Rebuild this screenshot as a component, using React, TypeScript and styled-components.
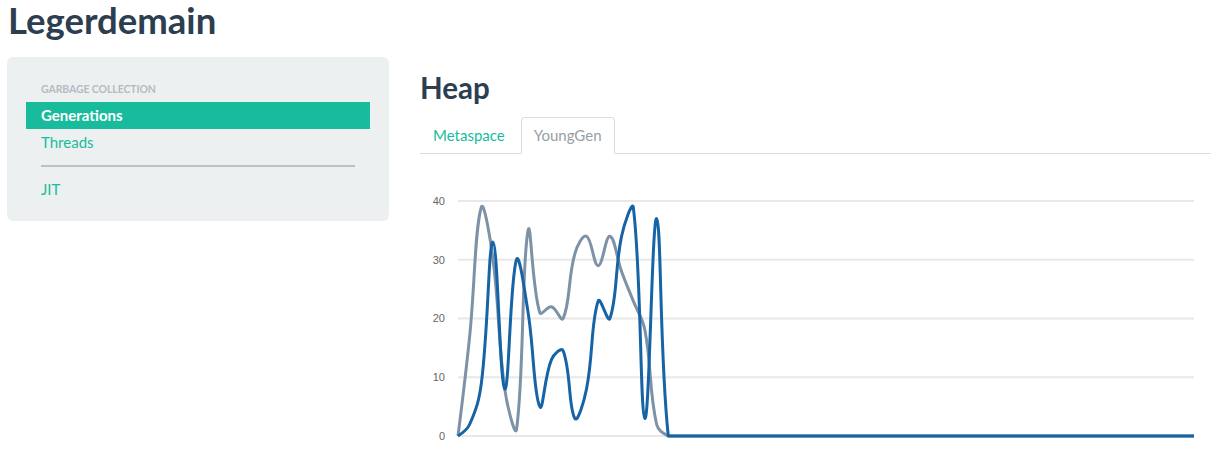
import React from "react";
import styled, { createGlobalStyle, css } from "styled-components";

const GlobalStyle = createGlobalStyle`
  html, body {
    margin: 0;
    padding: 0;
    background: #ffffff;
  }
  body {
    font-family: Lato, "Open Sans", "Liberation Sans", sans-serif;
    font-size: 15px;
    color: #2c3e50;
  }
  * { box-sizing: border-box; }
`;

const Page = styled.div`
  padding: 0 0 0 7px;
  overflow: hidden;
  height: 456px;
`;

const Title = styled.h1`
  margin: 0;
  padding: 2px 0 0 1px;
  font-size: 36.5px;
  line-height: 36px;
  font-weight: 700;
  color: #2c3e50;
`;

const Row = styled.div`
  display: flex;
  align-items: flex-start;
  gap: 31px;
  margin-top: 19px;
`;

const Well = styled.nav`
  flex: 0 0 382px;
  background: #ecf0f1;
  border-radius: 6px;
  padding: 19px 19px 18px;
  display: flex;
  flex-direction: column;
`;

const NavHeader = styled.div`
  padding: 0 15px;
  line-height: 26px;
  font-size: 10.5px;
  font-weight: 700;
  text-transform: uppercase;
  color: #b4bcc2;
  letter-spacing: -0.1px;
`;

const NavItem = styled.a<{ $active?: boolean }>`
  display: block;
  padding: 3px 15px;
  line-height: 21px;
  font-size: 15px;
  color: #18bc9c;
  text-decoration: none;
  ${(p) =>
    p.$active &&
    css`
      background: #18bc9c;
      color: #ffffff;
      font-weight: 700;
    `}
`;

const Divider = styled.hr`
  margin: 9px 15px;
  border: 0;
  height: 2px;
  background: #bdc1c4;
`;

const Main = styled.main`
  flex: 1;
  min-width: 0;
`;

const Heading = styled.h2`
  margin: 14px 0 0;
  font-size: 29.5px;
  line-height: 33px;
  font-weight: 700;
  color: #2c3e50;
`;

const Tabs = styled.ul`
  display: flex;
  gap: 3px;
  list-style: none;
  margin: 13px 0 0;
  padding: 0;
  border-bottom: 1px solid #dddddd;
`;

const Tab = styled.li<{ $active?: boolean }>`
  margin-bottom: -1px;
  padding: 7px 12px;
  line-height: 21px;
  font-size: 15px;
  border: 1px solid transparent;
  border-radius: 4px 4px 0 0;
  color: #18bc9c;
  ${(p) =>
    p.$active &&
    css`
      color: #95a0a6;
      background: #ffffff;
      border-color: #dddddd;
      border-bottom-color: #ffffff;
    `}
`;

const ChartSvg = styled.svg`
  display: block;
  margin-top: 21px;
`;

const W = 791;
const H = 281;
const X0 = 38;
const X1 = 774;
const TOP = 26;
const BOTTOM = 261;
const MAX = 40;
const N = 64;

const pad = (arr: number[]) => [...arr, ...Array(N - arr.length).fill(0)];

const gray = pad([0, 17, 39, 30, 8, 1, 35, 21, 22, 20, 31, 34, 29, 34, 28, 23, 18, 2, 0]);
const blue = pad([0, 2, 9, 33, 8, 30, 21, 5, 13, 14.5, 3, 8, 23, 20, 34, 39, 3, 37, 0]);

type P = { x: number; y: number };

function splinePath(values: number[]): string {
  const step = (X1 - X0) / (values.length - 1);
  const pts: P[] = values.map((v, i) => ({
    x: X0 + i * step,
    y: BOTTOM - (v / MAX) * (BOTTOM - TOP),
  }));
  const cap = (y: number) => Math.min(BOTTOM, Math.max(TOP, y));
  const cps = pts.map((p, i) => {
    const prev = pts[i - 1] || p;
    const next = pts[i + 1] || p;
    const t = i > 0 && i < pts.length - 1 ? 0.4 : 0;
    const d01 = Math.hypot(p.x - prev.x, p.y - prev.y);
    const d12 = Math.hypot(next.x - p.x, next.y - p.y);
    const sum = d01 + d12 || 1;
    const fa = (t * d01) / sum;
    const fb = (t * d12) / sum;
    return {
      inner: { x: p.x - fa * (next.x - prev.x), y: cap(p.y - fa * (next.y - prev.y)) },
      outer: { x: p.x + fb * (next.x - prev.x), y: cap(p.y + fb * (next.y - prev.y)) },
    };
  });
  let d = `M${pts[0].x.toFixed(2)},${pts[0].y.toFixed(2)}`;
  for (let i = 1; i < pts.length; i++) {
    const a = cps[i - 1].outer;
    const b = cps[i].inner;
    const p = pts[i];
    d += ` C${a.x.toFixed(2)},${a.y.toFixed(2)} ${b.x.toFixed(2)},${b.y.toFixed(2)} ${p.x.toFixed(2)},${p.y.toFixed(2)}`;
  }
  return d;
}

const ticks = [40, 30, 20, 10, 0];

function HeapChart() {
  return (
    <ChartSvg width={W} height={H} viewBox={`0 0 ${W} ${H}`}>
      {ticks.map((t) => {
        const y = BOTTOM - (t / MAX) * (BOTTOM - TOP);
        return (
          <g key={t}>
            <line x1={X0} x2={X1} y1={y} y2={y} stroke="#e8e8e8" strokeWidth={2} />
            <text
              x={25}
              y={y}
              dy="0.35em"
              textAnchor="end"
              fontFamily="'Liberation Sans', Arial, sans-serif"
              fontSize={11}
              fill="#666666"
            >
              {t}
            </text>
          </g>
        );
      })}
      <path d={splinePath(gray)} fill="none" stroke="#7d92a6" strokeWidth={3} strokeLinejoin="round" />
      <path d={splinePath(blue)} fill="none" stroke="#1663a6" strokeWidth={3} strokeLinejoin="round" />
    </ChartSvg>
  );
}

export default function App() {
  return (
    <>
      <GlobalStyle />
      <Page>
        <Title>Legerdemain</Title>
        <Row>
          <Well>
            <NavHeader>Garbage Collection</NavHeader>
            <NavItem $active href="#">Generations</NavItem>
            <NavItem href="#">Threads</NavItem>
            <Divider />
            <NavItem href="#">JIT</NavItem>
          </Well>
          <Main>
            <Heading>Heap</Heading>
            <Tabs>
              <Tab>Metaspace</Tab>
              <Tab $active>YoungGen</Tab>
            </Tabs>
            <HeapChart />
          </Main>
        </Row>
      </Page>
    </>
  );
}
